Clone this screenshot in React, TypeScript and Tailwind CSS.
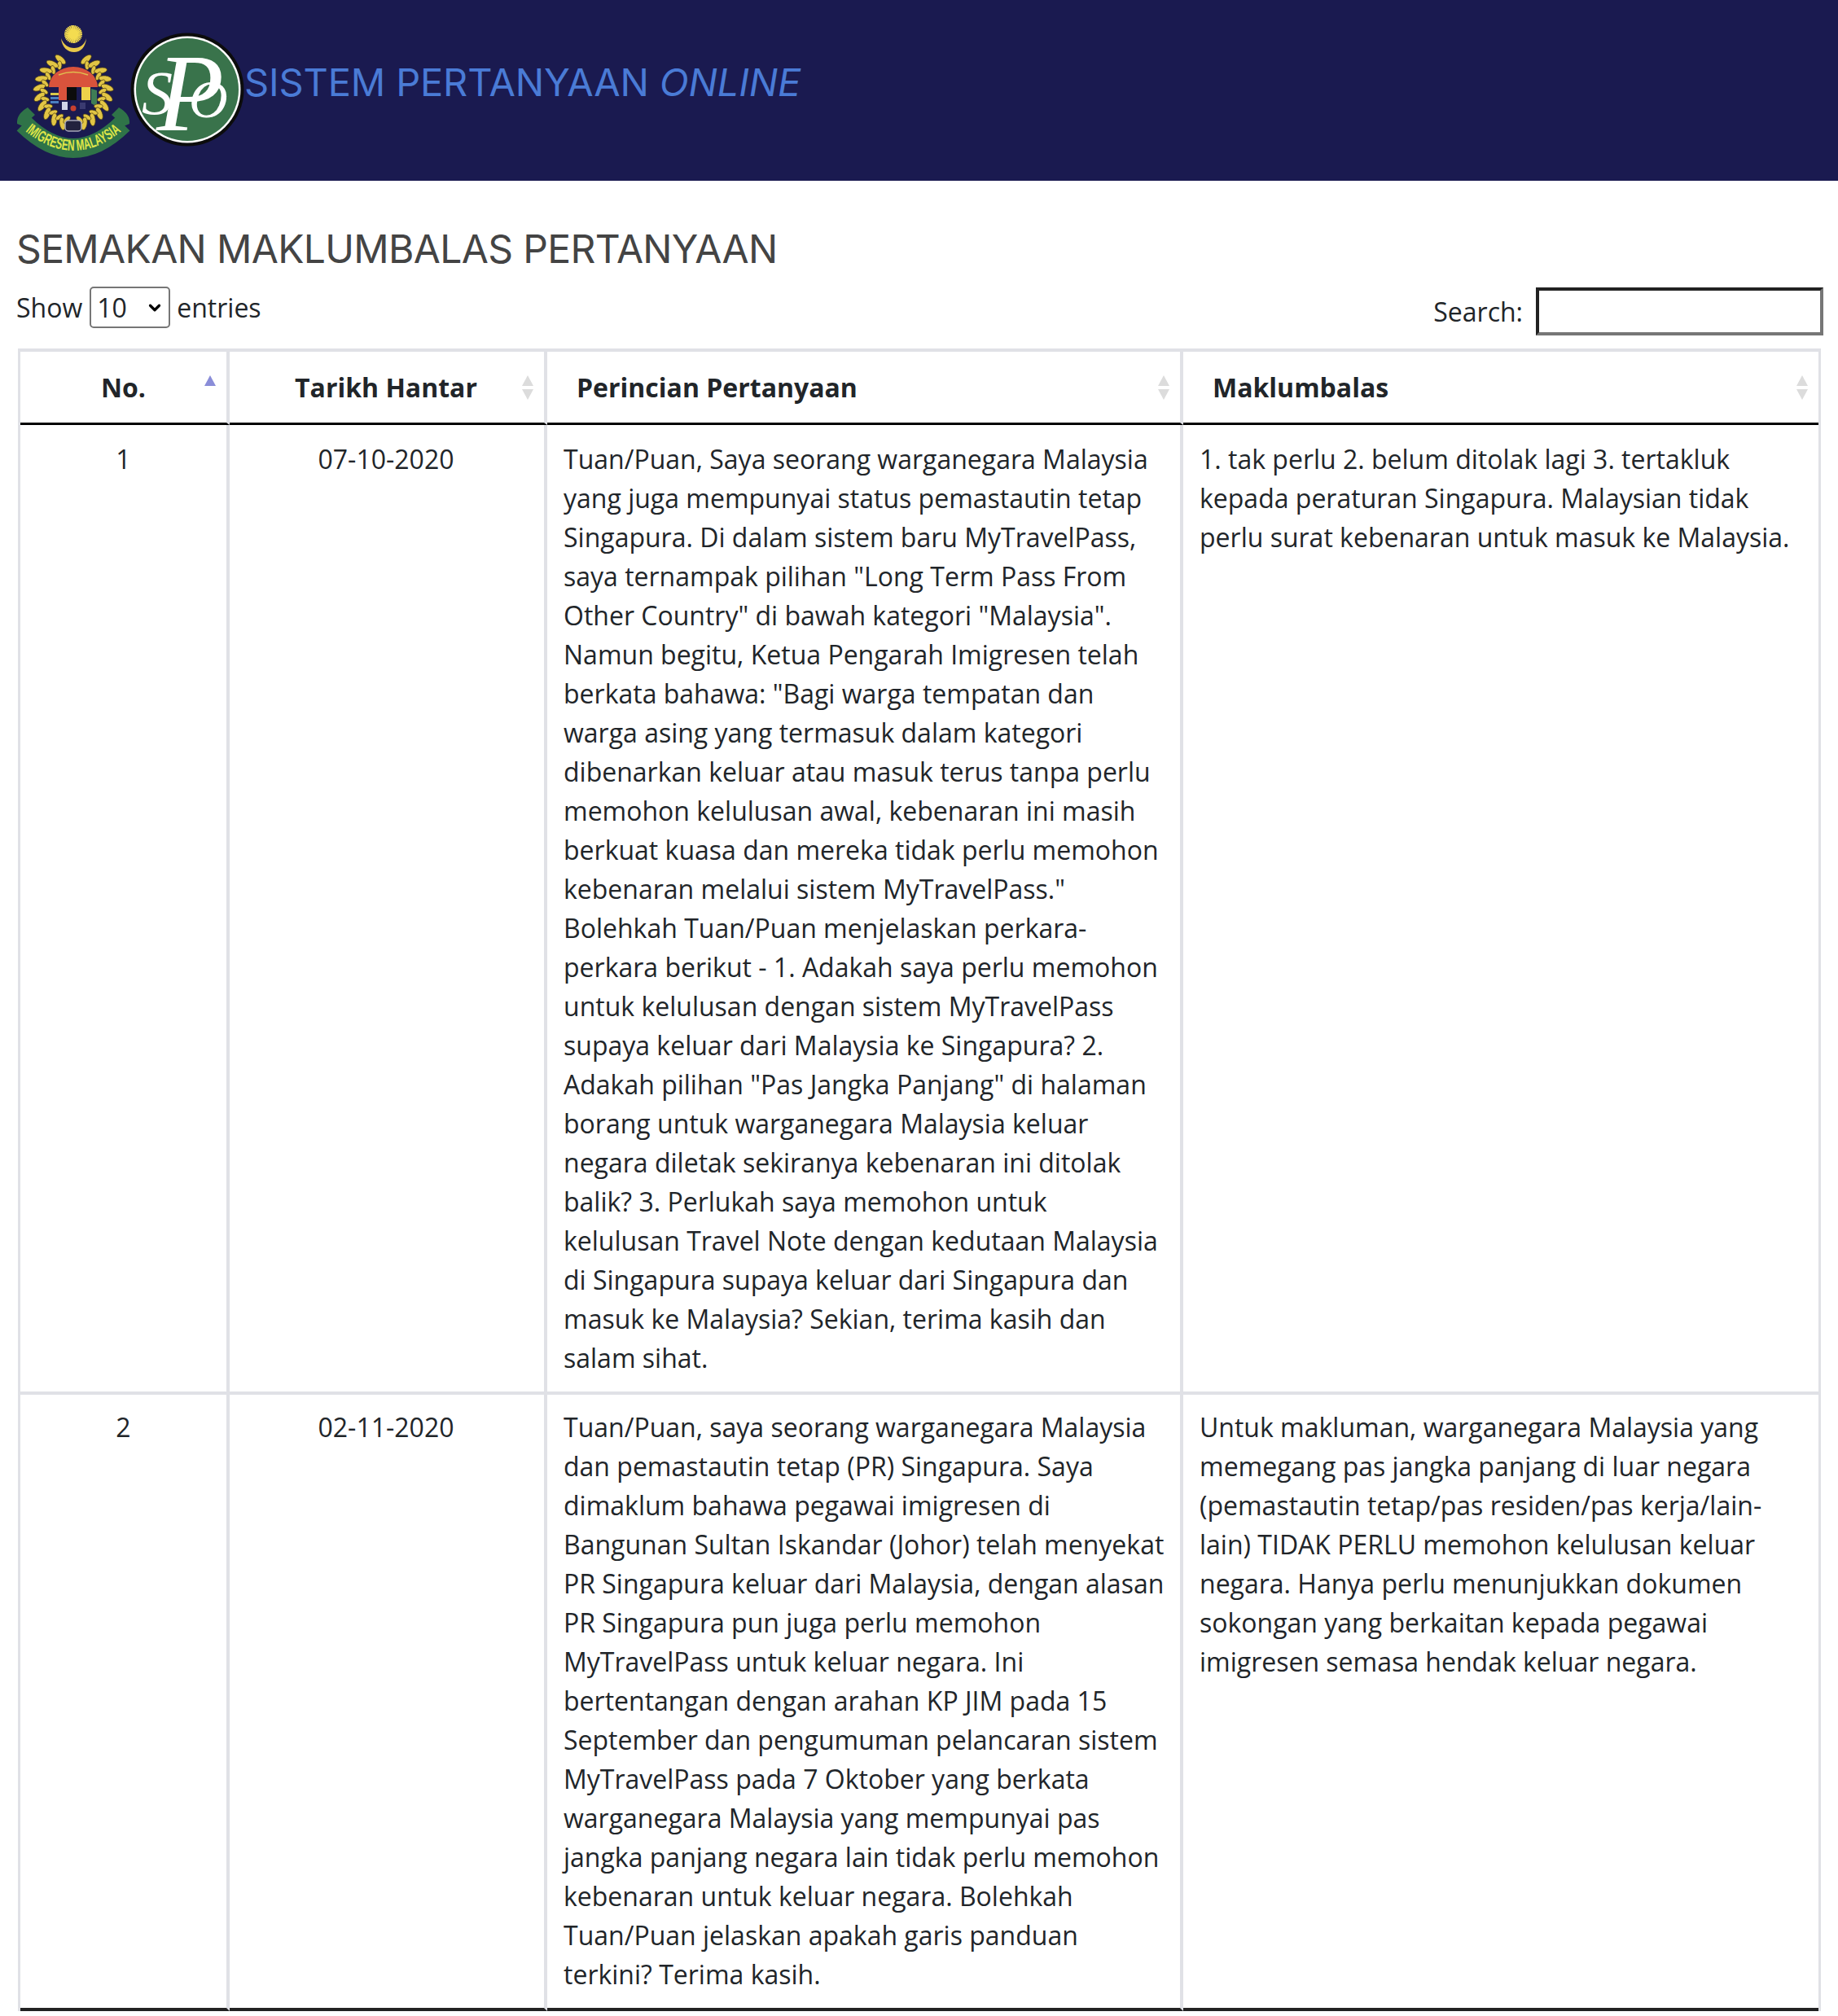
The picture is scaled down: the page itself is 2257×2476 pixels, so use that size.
import { ChevronDown } from "lucide-react";

const ROWS = [
  {
    no: 1,
    date: "07-10-2020",
    question:
      'Tuan/Puan, Saya seorang warganegara Malaysia yang juga mempunyai status pemastautin tetap Singapura. Di dalam sistem baru MyTravelPass, saya ternampak pilihan "Long Term Pass From Other Country" di bawah kategori "Malaysia". Namun begitu, Ketua Pengarah Imigresen telah berkata bahawa: "Bagi warga tempatan dan warga asing yang termasuk dalam kategori dibenarkan keluar atau masuk terus tanpa perlu memohon kelulusan awal, kebenaran ini masih berkuat kuasa dan mereka tidak perlu memohon kebenaran melalui sistem MyTravelPass." Bolehkah Tuan/Puan menjelaskan perkara-perkara berikut - 1. Adakah saya perlu memohon untuk kelulusan dengan sistem MyTravelPass supaya keluar dari Malaysia ke Singapura? 2. Adakah pilihan "Pas Jangka Panjang" di halaman borang untuk warganegara Malaysia keluar negara diletak sekiranya kebenaran ini ditolak balik? 3. Perlukah saya memohon untuk kelulusan Travel Note dengan kedutaan Malaysia di Singapura supaya keluar dari Singapura dan masuk ke Malaysia? Sekian, terima kasih dan salam sihat.',
    answer:
      "1. tak perlu 2. belum ditolak lagi 3. tertakluk kepada peraturan Singapura. Malaysian tidak perlu surat kebenaran untuk masuk ke Malaysia.",
  },
  {
    no: 2,
    date: "02-11-2020",
    question:
      "Tuan/Puan, saya seorang warganegara Malaysia dan pemastautin tetap (PR) Singapura. Saya dimaklum bahawa pegawai imigresen di Bangunan Sultan Iskandar (Johor) telah menyekat PR Singapura keluar dari Malaysia, dengan alasan PR Singapura pun juga perlu memohon MyTravelPass untuk keluar negara. Ini bertentangan dengan arahan KP JIM pada 15 September dan pengumuman pelancaran sistem MyTravelPass pada 7 Oktober yang berkata warganegara Malaysia yang mempunyai pas jangka panjang negara lain tidak perlu memohon kebenaran untuk keluar negara. Bolehkah Tuan/Puan jelaskan apakah garis panduan terkini? Terima kasih.",
    answer:
      "Untuk makluman, warganegara Malaysia yang memegang pas jangka panjang di luar negara (pemastautin tetap/pas residen/pas kerja/lain-lain) TIDAK PERLU memohon kelulusan keluar negara. Hanya perlu menunjukkan dokumen sokongan yang berkaitan kepada pegawai imigresen semasa hendak keluar negara.",
  },
];

function ImmigrationCrest() {
  const cx = 90;
  const cy = 112;
  const angles = Array.from({ length: 10 }, (_, i) => 22 + i * 15.5);
  return (
    <svg viewBox="0 20 160 180" className="h-[180px] w-[160px] shrink-0">
      {Array.from({ length: 14 }, (_, i) => (
        <line key={i} x1="90" y1="31" x2="90" y2="53" stroke="#f4dc50" strokeWidth="1.8" transform={`rotate(${i * 13} 90 42)`} />
      ))}
      <circle cx="90" cy="42" r="6" fill="#f4dc50" />
      <path d="M75 47c1 11 8 17 16 17s14-6 15-17c-2 8-8 12-15 12s-13-4-16-12z" fill="#e8c84a" />

      {/* panels inside the wreath */}
      <rect x="61" y="107" width="59" height="34" fill="#1a1a50" />
      <path d="M60 107a30 25 0 0 1 60 0z" fill="#d9533c" />
      <path d="M72 92q18-7 36 0" stroke="#e0c050" strokeWidth="1.5" fill="none" />
      <rect x="62" y="114" width="10" height="3" fill="#d8c84a" />
      <rect x="62" y="119" width="10" height="3" fill="#4a7fc0" />
      <rect x="62" y="124" width="10" height="3" fill="#4a7fc0" />
      <rect x="72" y="107" width="10" height="16" fill="#d9533c" />
      <rect x="82" y="107" width="12" height="16" fill="#0c0c0c" />
      <rect x="100" y="107" width="11" height="16" fill="#ecd24a" />
      <path d="M112 109l7 2v20l-7-4z" fill="#3f7d55" />
      <rect x="76" y="125" width="7" height="10" fill="#d0d4e8" />
      <circle cx="90" cy="133" r="3.5" fill="#c8402f" />
      <rect x="98" y="126" width="7" height="8" fill="#3a3a70" />

      {angles.map((a) => {
        const tilt = a + 28;
        return (
          <g key={a} fill="#e2c545" stroke="#4a3d12" strokeWidth="0.7">
            <ellipse cx={cx} cy={cy - 42} rx="3.6" ry="8" transform={`rotate(${a} ${cx} ${cy}) rotate(${tilt - a} ${cx} ${cy - 42})`} />
            <ellipse cx={cx} cy={cy - 42} rx="3.6" ry="8" transform={`rotate(${-a} ${cx} ${cy}) rotate(${a - tilt} ${cx} ${cy - 42})`} />
            <ellipse cx={cx} cy={cy - 36} rx="2.8" ry="5.5" transform={`rotate(${a + 6} ${cx} ${cy}) rotate(-30 ${cx} ${cy - 36})`} />
            <ellipse cx={cx} cy={cy - 36} rx="2.8" ry="5.5" transform={`rotate(${-a - 6} ${cx} ${cy}) rotate(30 ${cx} ${cy - 36})`} />
          </g>
        );
      })}
      <rect x="80" y="148" width="20" height="13" rx="4" fill="#22223e" stroke="#a8a8b8" strokeWidth="1.5" />

      <path d="M21 152q-1-12 13-20l9 9q-9 7-10 16z" fill="#2f7348" />
      <path d="M159 152q1-12-13-20l-9 9q9 7 10 16z" fill="#2f7348" />
      <path d="M29 152Q90 212 151 152" fill="none" stroke="#2f7348" strokeWidth="24" />
      <path id="crestRibbon" d="M25 156Q90 214 155 156" fill="none" />
      <text fontFamily="'Liberation Sans', sans-serif" fontSize="19" fontWeight="700" fill="#dfe648">
        <textPath href="#crestRibbon" startOffset="50%" textAnchor="middle" textLength="130" lengthAdjust="spacingAndGlyphs">
          IMIGRESEN MALAYSIA
        </textPath>
      </text>
    </svg>
  );
}

function SpoLogo() {
  return (
    <svg viewBox="0 0 140 140" className="h-[140px] w-[140px] shrink-0">
      <circle cx="70" cy="70" r="69.5" fill="#0c0c0c" />
      <circle cx="70" cy="70" r="65.5" fill="#fff" />
      <circle cx="70" cy="70" r="63" fill="#39734b" />
      <g fill="#fff" fontFamily="'Liberation Serif', serif" fontStyle="italic">
        <text x="14" y="100" fontSize="76">S</text>
        <text x="32" y="120" fontSize="136" fontWeight="400">P</text>
        <text x="72" y="104" fontSize="66">O</text>
      </g>
    </svg>
  );
}

function SortIcon({ active }: { active?: boolean }) {
  return (
    <svg viewBox="0 0 16 30" className="absolute right-[12px] top-[29px] h-[30px] w-[16px]">
      <path d="M8 0l7 13H1z" fill={active ? "#8a8dd8" : "#dcdcdc"} />
      {!active && <path d="M8 30l7-13H1z" fill="#dcdcdc" />}
    </svg>
  );
}

export default function App() {
  return (
    <div className="min-h-[2476px] bg-white font-['Open_Sans',sans-serif] text-[32px] leading-[48px] text-[#212529]">
      <header className="flex h-[222px] items-start bg-[#1a1a50] pt-[20px]">
        <ImmigrationCrest />
        <div className="mt-[20px]">
          <SpoLogo />
        </div>
        <h1 className="mt-[51px] font-['Inter',sans-serif] text-[47px] font-normal leading-[60px] tracking-[-0.15px] text-[#4a7bd6]">
          SISTEM PERTANYAAN <i>ONLINE</i>
        </h1>
      </header>

      <main className="px-[20px]">
        <h2 className="mt-[56px] font-['Inter',sans-serif] text-[48px] font-normal leading-[56px] tracking-[-0.65px] text-[#444]">
          SEMAKAN MAKLUMBALAS PERTANYAAN
        </h2>

        <div className="flex items-start justify-between">
          <label className="mt-[18px] flex items-center gap-[8px]">
            Show
            <span className="relative ml-[1px] block">
              <select className="block h-[51px] w-[99px] appearance-none rounded-[5px] border-2 border-[#767676] pl-[7px] text-[32px]">
                <option>10</option>
              </select>
              <ChevronDown className="absolute right-[8px] top-[15px] h-[22px] w-[22px] text-black" strokeWidth={3.5} />
            </span>
            entries
          </label>
          <label className="mr-[-2px] mt-[19px] flex items-center gap-[16px]">
            Search:
            <input
              type="search"
              className="h-[59px] w-[353px] border-4 border-t-[#222] border-r-[#767676] border-b-[#767676] border-l-[#222]"
            />
          </label>
        </div>

        <table className="mt-[16px] ml-[2px] w-[2214px] table-fixed border-separate border-spacing-0 border-x-[3px] border-t-4 border-[#e0e1e6]">
          <colgroup>
            <col className="w-[257px]" />
            <col className="w-[390px]" />
            <col className="w-[781px]" />
            <col />
          </colgroup>
          <thead>
            <tr>
              <th className="relative h-[90px] border-r-4 border-b-[3px] border-r-[#e0e1e6] border-b-black text-center font-bold">
                No.
                <SortIcon active />
              </th>
              <th className="relative border-r-4 border-b-[3px] border-r-[#e0e1e6] border-b-black pr-[2px] text-center font-bold">
                Tarikh Hantar
                <SortIcon />
              </th>
              <th className="relative border-r-4 border-b-[3px] border-r-[#e0e1e6] border-b-black pl-[36px] text-left font-bold">
                Perincian Pertanyaan
                <SortIcon />
              </th>
              <th className="relative border-b-[3px] border-b-black pl-[36px] text-left font-bold">
                Maklumbalas
                <SortIcon />
              </th>
            </tr>
          </thead>
          <tbody>
            {ROWS.map((row, i) => {
              const bottom = i === ROWS.length - 1 ? "border-b-[#222]" : "border-b-[#e0e1e6]";
              const top = i === 0 ? "pt-[18px]" : "pt-[16px]";
              return (
                <tr key={row.no}>
                  <td className={`border-r-4 border-b-4 border-r-[#e0e1e6] ${bottom} ${top} pb-[17px] text-center align-top`}>{row.no}</td>
                  <td className={`border-r-4 border-b-4 border-r-[#e0e1e6] ${bottom} ${top} pb-[17px] pr-[2px] text-center align-top`}>{row.date}</td>
                  <td className={`border-r-4 border-b-4 border-r-[#e0e1e6] ${bottom} ${top} pl-[20px] pr-[16px] pb-[17px] align-top`}>{row.question}</td>
                  <td className={`border-b-4 ${bottom} ${top} px-[20px] pb-[17px] align-top`}>{row.answer}</td>
                </tr>
              );
            })}
          </tbody>
        </table>
      </main>
    </div>
  );
}
